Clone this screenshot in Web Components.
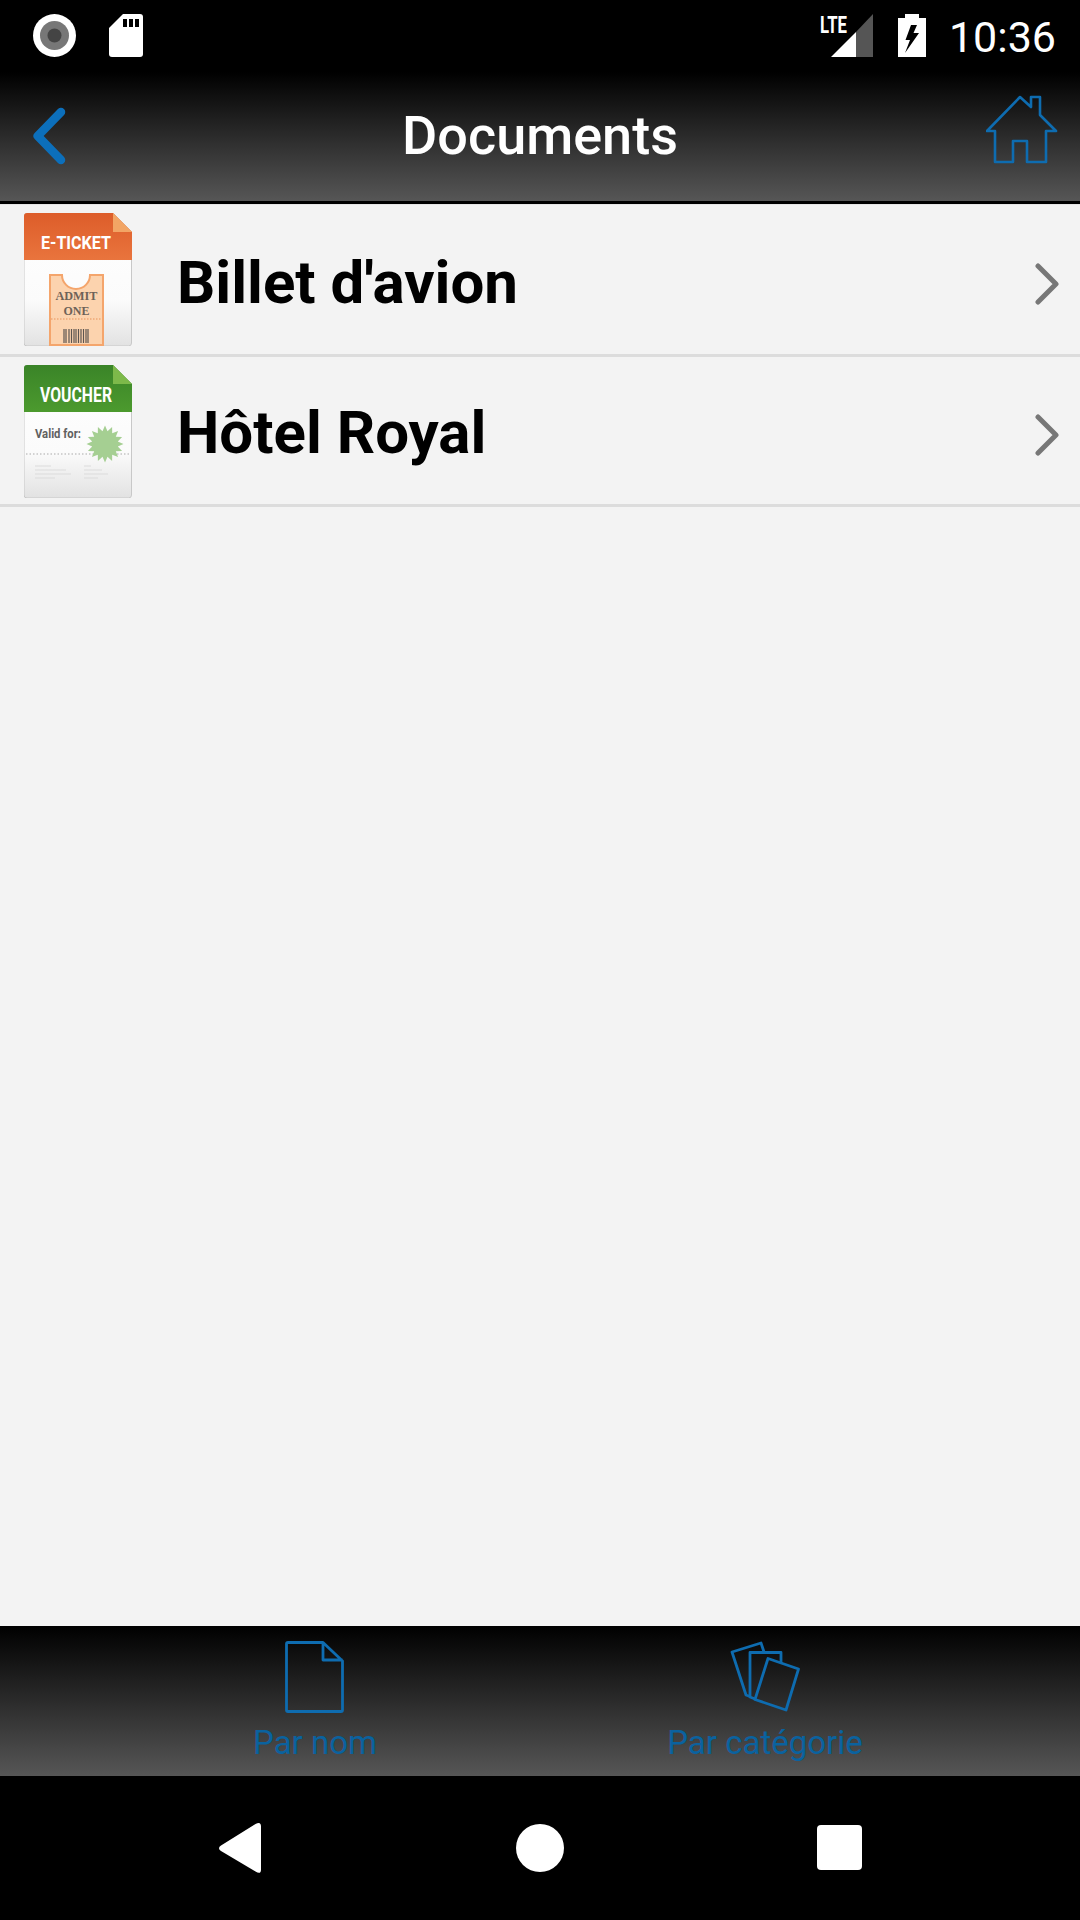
<!DOCTYPE html>
<html lang="fr"><head><meta charset="utf-8"><title>Documents</title>
<style>html,body{margin:0;padding:0;background:#f3f3f3}body{width:1080px;height:1920px;font-family:Roboto,"Liberation Sans",sans-serif}</style>
</head><body>
<app-shell>
  <status-bar slot="status"></status-bar>
  <app-header slot="header" title="Documents"></app-header>
  <doc-list slot="main">
    <doc-row label="Billet d'avion" first><ticket-thumb></ticket-thumb></doc-row>
    <doc-row label="Hôtel Royal"><voucher-thumb></voucher-thumb></doc-row>
  </doc-list>
  <tab-bar slot="tabs"></tab-bar>
  <nav-bar slot="nav"></nav-bar>
</app-shell>
<script>
function def(name, html){
  customElements.define(name, class extends HTMLElement{
    constructor(){super();const r=this.attachShadow({mode:'open'});r.innerHTML=typeof html==='function'?html(this):html;}
  });
}
def('app-shell',`<style>
:host{display:flex;flex-direction:column;width:1080px;height:1920px;background:#f3f3f3;overflow:hidden}
.m{flex:1;min-height:0}
</style><slot name="status"></slot><slot name="header"></slot><div class="m"><slot name="main"></slot></div><slot name="tabs"></slot><slot name="nav"></slot>`);

def('status-bar',`<style>
:host{display:flex;height:72px;background:#000;align-items:flex-start;justify-content:space-between;box-sizing:border-box;padding:4px 24px 0 33px;color:#fff}
.g{display:flex;align-items:flex-start}
svg{display:block;margin-top:10px}
.lte{width:54px;height:53px;margin-top:0}
.t{font:400 43px/44px Roboto,sans-serif;margin-left:23px;margin-top:11px}
</style>
<div class="g" style="gap:33px">
<svg width="43" height="43" viewBox="0 0 43 43"><circle cx="21.500" cy="21.500" r="21.500" fill="#fff"/><circle cx="21.500" cy="21.500" r="14.500" fill="#777"/><circle cx="21.500" cy="21.500" r="7" fill="#444"/></svg>
<svg width="34" height="43" viewBox="0 0 34 43"><path d="M14 0H31a3 3 0 0 1 3 3V40a3 3 0 0 1-3 3H3a3 3 0 0 1-3-3V14Z" fill="#fff"/><path d="M14 5h4v8h-4zM20 5h4v8h-4zM26 5h4v8h-4z" fill="#000"/></svg>
</div>
<div class="g">
<svg class="lte" viewBox="0 -10 54 53"><text x="0" y="19" font-family="Roboto,sans-serif" font-weight="700" font-size="23" fill="#fff" textLength="27" lengthAdjust="spacingAndGlyphs">LTE</text><path d="M11 43 L36 18 V43Z" fill="#fff"/><path d="M36 18 L53 0 V43 H36Z" fill="#555"/></svg>
<svg width="28" height="43" viewBox="0 0 28 43" style="margin-left:24px"><path d="M7 0H21V4H28V43H0V4H7Z" fill="#fff"/><path d="M13 11H19L15.500 19H21L7 39L12 26H7.500Z" fill="#000"/></svg>
<div class="t">10:36</div>
</div>`);

def('app-header',h=>`<style>
:host{display:grid;grid-template-columns:1fr auto 1fr;align-items:center;height:129px;border-bottom:3px solid #000;background:linear-gradient(#000,#565656)}
.l{padding-left:30px;display:flex}.r{justify-self:end;align-self:start;padding:23px 20px 0 0;display:flex}
h1{margin:0;font:500 54px/64px Roboto,sans-serif;color:#fff;position:relative;top:-1px}
svg{display:block}
</style>
<div class="l"><svg width="42" height="64" viewBox="0 0 42 64"><path d="M31 7 L7.700 31 L31 55 " fill="none" stroke="#0c6fbb" stroke-width="8.500" stroke-linecap="round" stroke-linejoin="round"/></svg></div>
<h1>${h.getAttribute('title')}</h1>
<div class="r"><svg width="74" height="70" viewBox="987 95 74 70"><path d="M988 131 L1021 97 L1032 107 V97 H1041 V115 L1057 131 H1047 V162 H1028 V141 H1014 V162 H996 V131Z" fill="none" stroke="#0e6cb0" stroke-width="2.600" stroke-linejoin="round"/></svg></div>`);

def('doc-list',`<style>:host{display:block;border-top:1px solid #e6e6e6}</style><slot></slot>`);

def('doc-row',h=>`<style>
:host{display:flex;align-items:center;box-sizing:border-box;height:${h.hasAttribute('first')?152:150}px;border-bottom:3px solid #dcdcdc;padding:0 21.500px 0 24px}
.s{flex:none;width:108px;height:133px;margin-right:45px}
:host(:not([first])) .s{position:relative;top:1px}
.t{flex:1;font:700 60px/70px Roboto,sans-serif;color:#000;position:relative;top:${h.hasAttribute('first')?3:2}px}
svg{display:block;position:relative;top:4px}
</style>
<div class="s"><slot></slot></div><div class="t">${h.getAttribute('label')}</div>
<svg width="24" height="42" viewBox="0 0 24 42"><path d="M3 3 L21 21 L3 39" fill="none" stroke="#777" stroke-width="5" stroke-linecap="round" stroke-linejoin="round"/></svg>`);

const sheet=(id,c1,c2,fold,hh)=>`<defs>
<linearGradient id="${id}h" x1="0" y1="0" x2="0" y2="1"><stop offset="0" stop-color="${c1}"/><stop offset="1" stop-color="${c2}"/></linearGradient>
<linearGradient id="${id}b" x1="0" y1="0" x2="0" y2="1"><stop offset="0" stop-color="#fff"/><stop offset=".65" stop-color="#fbfbfb"/><stop offset="1" stop-color="#e2e2e2"/></linearGradient></defs>
<path d="M3 .5H89L107.500 19V130a3 3 0 0 1-3 3H3a3 3 0 0 1-3-3V3a3 3 0 0 1 3-2.500Z" fill="url(#${id}b)" stroke="#c8c8c8" stroke-width="1"/>
<path d="M3 0H89L108 19V${hh}H0V3a3 3 0 0 1 3-3Z" fill="url(#${id}h)"/>
<path d="M89 0L108 19H89Z" fill="${fold}"/>`;

def('ticket-thumb',`<style>:host{display:block;width:108px;height:133px}svg{display:block}</style>
<svg width="108" height="133" viewBox="0 0 108 133">${sheet('t','#dd5d2a','#e9743d','#f2a565',47)}
<text x="52" y="36" text-anchor="middle" font-family="Roboto,sans-serif" font-weight="700" font-size="19" fill="#fff" textLength="70" lengthAdjust="spacingAndGlyphs">E-TICKET</text>
<path d="M26 62H38a14 14 0 0 0 28 0H79V132H26Z" fill="#fcd3ae" stroke="#f4a56c" stroke-width="2"/>
<text x="52.500" y="87" text-anchor="middle" font-family="Liberation Serif,serif" font-weight="700" font-size="13" fill="#6e6258" textLength="42" lengthAdjust="spacingAndGlyphs">ADMIT</text>
<text x="52.500" y="102" text-anchor="middle" font-family="Liberation Serif,serif" font-weight="700" font-size="13" fill="#6e6258" textLength="26" lengthAdjust="spacingAndGlyphs">ONE</text>
<line x1="27" x2="78" y1="106" y2="106" stroke="#e8935a" stroke-width="1" stroke-dasharray="1.500 1.500"/>
<path d="M40 116v14M42 116v14M45 116v14M47.500 116v14M50 116v14M52 116v14M54.500 116v14M57 116v14M59.500 116v14M62 116v14M64 116v14" stroke="#5c5550" stroke-width="1.200"/>
</svg>`);

const star=(()=>{let p=[];for(let i=0;i<32;i++){const r=i%2?13:18.5,a=i*Math.PI/16;p.push((81+r*Math.cos(a)).toFixed(1)+','+(79+r*Math.sin(a)).toFixed(1));}return p.join(' ')})();
def('voucher-thumb',`<style>:host{display:block;width:108px;height:133px}svg{display:block}</style>
<svg width="108" height="133" viewBox="0 0 108 133">${sheet('v','#3a8428','#4c9a2e','#7db94a',47)}
<text x="52" y="37" text-anchor="middle" font-family="Roboto,sans-serif" font-weight="700" font-size="20" fill="#fff" textLength="72" lengthAdjust="spacingAndGlyphs">VOUCHER</text>
<text x="11" y="73" font-family="Roboto,sans-serif" font-weight="700" font-size="13" fill="#606060" textLength="46" lengthAdjust="spacingAndGlyphs">Valid for:</text>
<line x1="2" x2="106" y1="89" y2="89" stroke="#aaa" stroke-width="1" stroke-dasharray="1.500 2"/>
<polygon points="${star}" fill="#a5cf92"/>
<path d="M11 101h16M11 105h31M11 109h36M11 113h20M60 101h7M60 105h18M60 109h24M60 113h14" stroke="#dcdcdc" stroke-width="1.200"/>
</svg>`);

def('tab-item',h=>`<style>
:host{display:flex;flex-direction:column;align-items:center;padding-top:15px}
svg{display:block}
.l{font:400 33px/38px Roboto,sans-serif;color:#0a629f;margin-top:11px}
</style><slot></slot><div class="l">${h.getAttribute('label')}</div>`);

def('tab-bar',`<style>
:host{display:grid;grid-template-columns:1fr 1fr;height:150px;padding:0 90px;background:linear-gradient(#000,#565656);box-sizing:border-box}
</style>
<tab-item label="Par nom"><svg width="60" height="72" viewBox="285 1641 60 72"><path d="M288 1642.500H323L342.500 1661V1710a1.500 1.500 0 0 1-1.500 1.500H288a1.500 1.500 0 0 1-1.500-1.500V1644a1.500 1.500 0 0 1 1.500-1.500ZM323 1642.500V1660H342.500" fill="none" stroke="#0e6cb0" stroke-width="2.800" stroke-linejoin="round"/></svg></tab-item>
<tab-item label="Par catégorie"><svg width="72" height="72" viewBox="729 1641 72 72"><g fill="none" stroke="#0e6cb0" stroke-width="2.800" stroke-linejoin="round"><path d="M750 1696.500L746 1695L732 1652L761 1643L764 1652"/><path d="M755 1699L750 1697V1652.500H781V1663"/><path d="M768 1658.500L798.500 1669L786 1710L755 1699.500Z"/></g></svg></tab-item>`);

def('nav-bar',`<style>
:host{display:block;height:144px;background:#000}
svg{display:block}
</style>
<svg width="1080" height="144" viewBox="0 1776 1080 144"><path d="M221 1845.500L255.500 1824Q261 1821 261 1826.500V1869.500Q261 1875 255.500 1871.500L221 1851Q217 1848 221 1845.500Z" fill="#fff"/><circle cx="540" cy="1848" r="24" fill="#fff"/><rect x="817" y="1825" width="45" height="45" rx="4" fill="#fff"/></svg>`);
</script>
</body></html>
